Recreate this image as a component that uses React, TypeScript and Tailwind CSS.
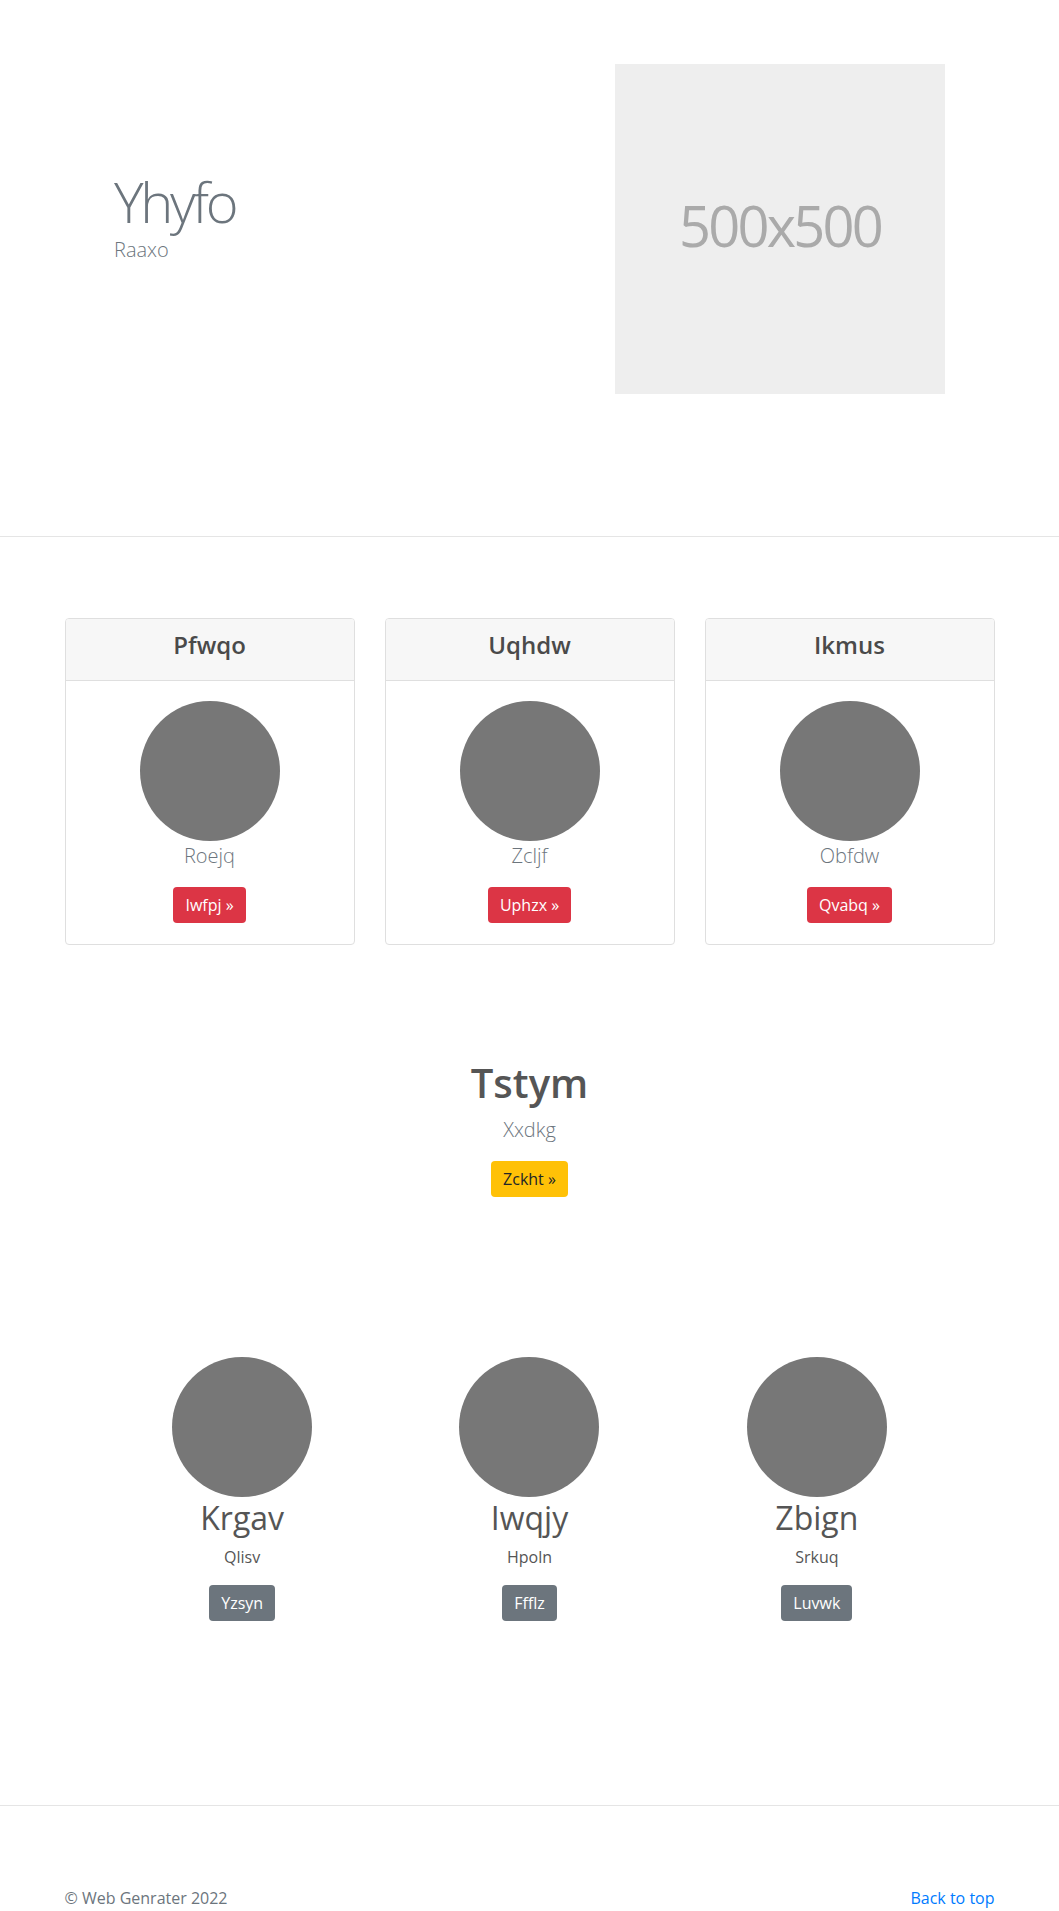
import React from "react";

const cards = [
  { title: "Pfwqo", sub: "Roejq", btn: "Iwfpj" },
  { title: "Uqhdw", sub: "Zcljf", btn: "Uphzx" },
  { title: "Ikmus", sub: "Obfdw", btn: "Qvabq" },
];

const people = [
  { name: "Krgav", sub: "Qlisv", btn: "Yzsyn" },
  { name: "Iwqjy", sub: "Hpoln", btn: "Ffflz" },
  { name: "Zbign", sub: "Srkuq", btn: "Luvwk" },
];

export default function App() {
  return (
    <div className="bg-white font-['Open_Sans','Noto_Sans',sans-serif] text-[#212529] min-h-[1911px]">
      {/* Hero */}
      <section className="border-b border-[#e5e5e5] pt-[64px] pb-[142px]">
        <div className="mx-auto flex w-[831px] items-start justify-between">
          <div className="mt-[104px]">
            <h1 className="text-[56px] font-light leading-[1.2] tracking-[-0.06em] text-[#6c757d]">Yhyfo</h1>
            <p className="text-[20px] font-light leading-[30px] text-[#6c757d]">Raaxo</p>
          </div>
          <div className="flex h-[330px] w-[330px] items-center justify-center bg-[#eeeeee] pb-[8px] text-[56px] tracking-[-0.05em] text-[#aaaaaa]">
            500x500
          </div>
        </div>
      </section>

      {/* Cards */}
      <section className="pt-[81px]">
        <div className="mx-auto grid w-[930px] grid-cols-3 gap-[30px]">
          {cards.map((c) => (
            <div key={c.title} className="overflow-hidden rounded-[4px] border border-[#dfdfdf] bg-white">
              <div className="border-b border-[#dfdfdf] bg-[#f7f7f7] px-5 pt-3 pb-3 text-center">
                <h4 className="mb-2 text-[24px] font-semibold leading-[1.2] text-[#4a4a4a]">{c.title}</h4>
              </div>
              <div className="px-5 pt-5 pb-[21px] text-center">
                <div className="mx-auto h-[140px] w-[140px] rounded-full bg-[#777777]" />
                <p className="mb-4 text-[20px] font-light leading-[30px] text-[#6c757d]">{c.sub}</p>
                <span className="inline-block rounded-[4px] bg-[#dc3545] px-3 py-[6px] text-[16px] leading-6 text-white">
                  {c.btn} »
                </span>
              </div>
            </div>
          ))}
        </div>
      </section>

      {/* Centered call */}
      <section className="pt-[114px] text-center">
        <h1 className="mb-2 text-[40px] font-semibold leading-[1.2] text-[#555555]">Tstym</h1>
        <p className="mb-4 text-[20px] font-light leading-[30px] text-[#6c757d]">Xxdkg</p>
        <span className="inline-block rounded-[4px] bg-[#ffc107] px-3 py-[6px] text-[16px] leading-6 text-[#212529]">
          Zckht »
        </span>
      </section>

      {/* People */}
      <section className="border-b border-[#e5e5e5] pt-[160px] pb-[184px]">
        <div className="mx-auto grid w-[862px] grid-cols-3">
          {people.map((p) => (
            <div key={p.name} className="flex flex-col items-center text-center">
              <div className="h-[140px] w-[140px] rounded-full bg-[#777777]" />
              <h2 className="mt-[2px] mb-2 text-[32px] font-normal leading-[1.2] text-[#555555]">{p.name}</h2>
              <p className="mb-4 text-[16px] leading-6 text-[#555555]">{p.sub}</p>
              <span className="inline-block rounded-[4px] bg-[#6c757d] px-3 py-[6px] text-[16px] leading-6 text-white">
                {p.btn}
              </span>
            </div>
          ))}
        </div>
      </section>

      {/* Footer */}
      <footer className="pt-[80px] pb-[24px]">
        <div className="mx-auto flex w-[930px] items-center justify-between text-[16px] leading-6">
          <p className="text-[#6c757d]">© Web Genrater 2022</p>
          <a className="text-[#007bff]" href="#">Back to top</a>
        </div>
      </footer>
    </div>
  );
}
